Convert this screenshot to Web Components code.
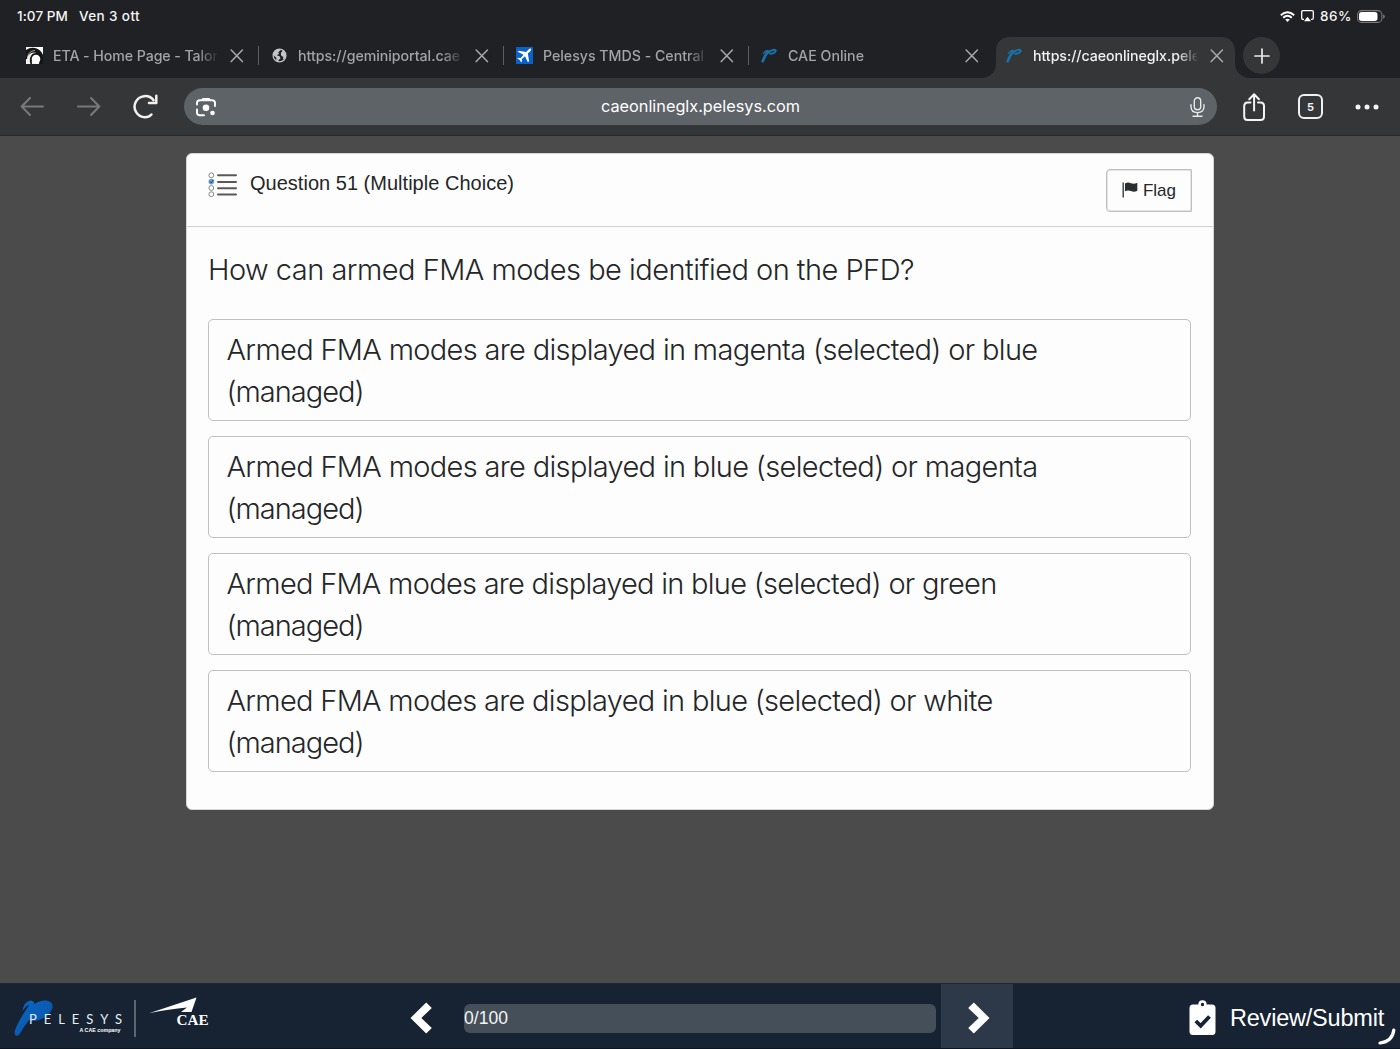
<!DOCTYPE html>
<html lang="en">
<head>
<meta charset="utf-8">
<title>caeonlineglx.pelesys.com</title>
<style>
html,body{margin:0;height:100%;overflow:hidden;background:#4b4b4b}
body{font-family:Inter,sans-serif}
</style>
</head>
<body>
<exam-screen></exam-screen>
<script>
const CLOSE = '<svg width="14" height="14" viewBox="0 0 14 14" fill="none" stroke="#a7a9ac" stroke-width="1.5" stroke-linecap="round"><path d="M1.2 1 12.400 12.600M12.400 1 1.200 12.600"/></svg>';
const ICONS = {
  eta: '<svg width="17" height="17" viewBox="0 0 17 17"><path d="M0 0H17V17H0Z" fill="#f4f4f4"/><path d="M0 3Q5-.5 10 1.200Q15 3 17 8V17H13Q14.500 9 9.500 8.500Q5 9 6 17H4.500Q2 10 8 5.500Q2 6 1 12H0Z" fill="#151515"/><path d="M1.500 11Q2 4 9 3.500M3.500 15Q2 7 9.500 5.500" stroke="#ddd" stroke-width=".7" fill="none"/><circle cx="10" cy="12" r="4.300" fill="#fff"/><path d="M8 0H17V7Q14 1.500 8 0Z" fill="#fff"/></svg>',
  globe: '<svg width="17" height="17" viewBox="0 0 17 17"><circle cx="8.500" cy="8.500" r="6.400" fill="#202124" stroke="#c3c5c8" stroke-width="1.300"/><path d="M2 6.500 4.500 3 8.500 2 9.500 3.300 7.300 5.300 8 7 5.600 8.200 8.600 9.300 9.500 11.200 7.700 13 7 15 5.300 13 5.400 10.800 3 8.800ZM10.200 5.600 12 3.300 14.600 6.500 14.800 9.500 13.200 12.500 12 12 12.300 9.800 10.500 9 9.800 7Z" fill="#c3c5c8"/></svg>',
  plane: '<svg width="17" height="17" viewBox="0 0 17 17"><path d="M0 0H17V17H0Z" fill="#0862c8"/><path d="M14.900 1.600Q15.900 2.500 14.300 4.200L11.800 6.500 13.100 14.300 11.900 15.300 9 9.300 5.800 12 6 14.300 5 15.300 3.700 12.900 1.300 11.600 2.300 10.700 4.700 10.900 7.500 7.700 1.600 4.800 2.600 3.700 10.200 5 12.600 2.500Q14 1.100 14.900 1.600Z" fill="#fff"/></svg>',
  pel: '<svg width="17" height="17" viewBox="0 0 17 17" fill="none" stroke="#1873ac" stroke-linecap="round"><path d="M1.700 14.200Q3.500 9.500 6.700 4.500" stroke-width="2.600"/><path d="M2.200 6.500Q4.500 3.300 7.300 3.300" stroke-width="1.200"/><path d="M6.500 6Q10 2.500 13.500 2.800Q16 3.300 13.500 5.500Q11.300 7.200 9 6.600" stroke-width="1.900"/></svg>'
};

function define(name, css, html, after) {
  customElements.define(name, class extends HTMLElement {
    connectedCallback() {
      if (this.shadowRoot) return;
      const root = this.attachShadow({ mode: 'open' });
      const markup = typeof html === 'function' ? html(this) : html;
      root.innerHTML = '<style>:host{box-sizing:border-box}*{box-sizing:border-box}svg{display:block;flex:none}' + css + '</style>' + markup;
      if (after) after(this, root);
    }
  });
}

define('exam-screen', ':host{display:flex;flex-direction:column;height:1049px;width:1400px;background:#4b4b4b}main{flex:1;padding:17px 186px 0}',
  '<status-bar></status-bar><tab-strip></tab-strip><browser-toolbar></browser-toolbar><main><question-card></question-card></main><exam-footer></exam-footer>');

define('status-bar', ':host{display:flex;height:34px;background:#202124;color:#f5f5f5;font:500 13.5px/33px Inter,sans-serif;padding:0 17px 0 17px}.l{display:flex;gap:11px;flex:1}.r{display:flex;align-items:center;gap:6px;height:32px}',
  `<div class="l"><fit-text w="51">1:07 PM</fit-text><fit-text w="61">Ven 3 ott</fit-text></div>
  <div class="r"><svg width="15" height="11" viewBox="0 0 15 11" fill="none" stroke="#fff" stroke-width="1.900"><path d="M.8 4.300Q7.500-2 14.200 4.300M3.200 6.700Q7.500 2.900 11.800 6.700"/><path d="M5.200 8.500Q7.500 6.800 9.800 8.500L7.500 10.900Z" fill="#fff" stroke="none"/></svg>
  <svg width="13" height="12" viewBox="0 0 13 12"><path d="M3 9.300H2Q.7 9.300.7 8V2Q.7.700 2 .7H11Q12.300.700 12.300 2V8Q12.300 9.300 11 9.300H10" fill="none" stroke="#fff" stroke-width="1.300"/><path d="M6.500 6.800 10 11.300H3Z" fill="#fff"/></svg>
  <fit-text w="32">86%</fit-text>
  <svg style="margin-left:-1px;margin-right:-2px" width="28" height="13" viewBox="0 0 28 13"><rect x=".6" y=".6" width="24.300" height="11.800" rx="4" fill="none" stroke="#77797c" stroke-width="1.100"/><rect x="2" y="2" width="18.500" height="9" rx="2.700" fill="#fff"/><path d="M26.200 4.300Q27.800 5 27.800 6.500T26.200 8.700Z" fill="#77797c"/></svg></div>`);

define('tab-strip', ':host{display:flex;height:44px;background:#202124;padding-left:13px}.new{width:37px;height:37px;border-radius:50%;background:#353638;margin:3px 0 0 7px;display:flex;align-items:center;justify-content:center}',
  `<browser-tab icon="eta"><fit-text w="168">ETA - Home Page - Talon</fit-text></browser-tab>
  <browser-tab icon="globe"><fit-text w="162">https://geminiportal.cae</fit-text></browser-tab>
  <browser-tab icon="plane"><fit-text w="161">Pelesys TMDS - Central</fit-text></browser-tab>
  <browser-tab icon="pel" last><fit-text w="76">CAE Online</fit-text></browser-tab>
  <browser-tab icon="pel" active><fit-text w="167">https://caeonlineglx.pele</fit-text></browser-tab>
  <div class="new"><svg width="16" height="16" viewBox="0 0 16 16" stroke="#e8eaed" stroke-width="1.700" stroke-linecap="round"><path d="M8 1V15M1 8H15"/></svg></div>`);

define('browser-tab', `:host{display:block;width:245px;height:44px;color:#a2a4a7;font:500 14.200px/36px Inter,sans-serif;flex:none}
  .row{position:relative;z-index:1;display:flex;align-items:center;height:37px;margin-top:3px;padding-left:13px;width:245px}
  .t{width:164px;margin:0 13px 0 10px;white-space:nowrap;overflow:hidden;-webkit-mask-image:linear-gradient(90deg,#000 88%,transparent 101%);mask-image:linear-gradient(90deg,#000 88%,transparent 101%)}
  .sep{width:1.500px;height:19px;background:#5b5e63;margin-left:auto;margin-right:-1px}
  :host([last]) .sep,:host([active]) .sep{display:none}
  .bg{display:none}
  :host([active]){width:243px;color:#f1f1f2}
  :host([active]) .row{margin-top:-41px}
  :host([active]) .bg{display:block;margin-left:-14px}`,
  el => `<svg class="bg" width="275" height="44" viewBox="0 0 275 44"><path d="M0 44H2C12 44 17 37 17 29V17C17 9 22 3 31 3H242C251 3 256 9 256 17V29C256 37 262 44 271 44Z" fill="#353638"/></svg><div class="row">${ICONS[el.getAttribute('icon')]}<div class="t"><slot></slot></div>${CLOSE}<i class="sep"></i></div>`);

define('browser-toolbar', `:host{display:flex;align-items:center;height:58px;background:#353638;border-bottom:1px solid #252628;padding:0 20px 0 20px}
  .omni{display:flex;align-items:center;width:1033px;height:37px;border-radius:19px;background:#5d6367;color:#fff;padding:0 12px;margin-left:26px;margin-right:26px;font:400 16.300px/34px Inter,sans-serif}
  .omni fit-text{margin:-2px 390px 0 384px}`,
  `<svg width="24" height="20" viewBox="0 0 24 20" fill="none" stroke="#77797b" stroke-width="2" stroke-linecap="round" stroke-linejoin="round"><path d="M23 9.500H2M10 1 1.700 9.500 10 18"/></svg>
  <svg style="margin-left:33px" width="24" height="20" viewBox="0 0 24 20" fill="none" stroke="#77797b" stroke-width="2" stroke-linecap="round" stroke-linejoin="round"><path d="M1 9.500H22M14 1 22.300 9.500 14 18"/></svg>
  <svg style="margin-left:32px" width="25" height="26" viewBox="0 0 25 26" fill="none" stroke="#f1f1f1" stroke-width="2.500" stroke-linecap="round" stroke-linejoin="round"><path d="M18.400 20.500Q16 23.300 12 23.300A10.600 10.600 0 1 1 20.500 6.100M23.300 1.800V9H16"/></svg>
  <div class="omni"><svg style="margin-left:-1px" width="22" height="22" viewBox="0 0 22 22"><path d="M2 8.500V7Q2 4.300 5 4.300H17Q20 4.300 20 7V10M2 13.500V16.500Q2 19.300 5 19.300H9" fill="none" stroke="#fff" stroke-width="1.900" stroke-linecap="round" stroke-linejoin="round"/><path d="M6 4.500 7.500 1.900H14.500L16 4.500Z" fill="#fff"/><circle cx="11" cy="11.800" r="3.300" fill="#fff"/><circle cx="17.500" cy="17" r="2.300" fill="#fff"/></svg>
  <fit-text w="199">caeonlineglx.pelesys.com</fit-text>
  <svg width="15" height="20" viewBox="0 0 15 20" fill="none" stroke="#e8e9ea" stroke-width="1.400" stroke-linecap="round"><rect x="4.300" y=".8" width="6.400" height="12" rx="3.200"/><path d="M1 7.800V9.500Q1 15.600 7.500 15.600T14 9.500V7.800M7.500 16V19M3 19.200H12"/></svg></div>
  <svg width="23" height="28" viewBox="0 0 23 28" fill="none" stroke="#f4f4f4" stroke-width="2" stroke-linecap="round" stroke-linejoin="round"><path d="M7.500 9.500H4.500Q1.200 9.500 1.200 13V23.500Q1.200 27 4.500 27H17.500Q21 27 21 23.500V13Q21 9.500 17.500 9.500H15M11.100 17.500V1.500M6.300 6.200 11.100 1.300 15.900 6.200"/></svg>
  <tab-count style="margin:0 32px 0 32px">5</tab-count>
  <svg width="24" height="6" viewBox="0 0 24 6" fill="#f4f4f4"><circle cx="3" cy="3" r="2.500"/><circle cx="12" cy="3" r="2.500"/><circle cx="21" cy="3" r="2.500"/></svg>`);

define('tab-count', ':host{display:flex;width:25px;height:25px;border:2px solid #f1f1f1;border-radius:6px;color:#f1f1f1;align-items:center;justify-content:center;font:700 11px/22px Inter,sans-serif}', '<slot></slot>');

define('question-card', `:host{display:block;width:1028px;height:657px;background:#fdfdfd;border-radius:6px;color:#242628;border:1px solid #d5d5d5}
  header{height:73px;border-bottom:1px solid #d2d2d2;display:flex;padding:15px 21px 0 21px}
  header>svg{margin-top:3px}
  .title{flex:1;margin-left:11px;font:400 20px/29px "Liberation Sans",sans-serif}
  .q{font:300 29px/42px Inter,sans-serif;padding:22px 0 0 21px;height:92px;white-space:nowrap}
  .list{display:flex;flex-direction:column;gap:15px;margin:0 22px 0 21px}`,
  `<header><svg width="31" height="26" viewBox="0 0 31 26"><g fill="#fff" stroke="#858585" stroke-width="1"><circle cx="3.300" cy="3.300" r="2.400"/><circle cx="3.300" cy="9.700" r="2.400" fill="#5b9bd8" stroke="#6d98bd"/><circle cx="3.300" cy="16" r="2.400"/><circle cx="3.300" cy="22.200" r="2.400"/></g><path d="M2 9.500 3.200 11 5.500 7.700" stroke="#24598c" fill="none"/><path d="M10 3.300H28M10 9.900H28M10 16.200H28M10 22.500H28" stroke="#58595b" stroke-width="2" stroke-linecap="round"/></svg>
  <div class="title"><fit-text w="264">Question 51 (Multiple Choice)</fit-text></div><flag-button>Flag</flag-button></header>
  <div class="q"><fit-text w="706">How can armed FMA modes be identified on the PFD?</fit-text></div>
  <div class="list">
  <answer-option><fit-text w="811">Armed FMA modes are displayed in magenta (selected) or blue</fit-text><br><fit-text w="137">(managed)</fit-text></answer-option>
  <answer-option><fit-text w="811">Armed FMA modes are displayed in blue (selected) or magenta</fit-text><br><fit-text w="137">(managed)</fit-text></answer-option>
  <answer-option><fit-text w="770">Armed FMA modes are displayed in blue (selected) or green</fit-text><br><fit-text w="137">(managed)</fit-text></answer-option>
  <answer-option><fit-text w="766">Armed FMA modes are displayed in blue (selected) or white</fit-text><br><fit-text w="137">(managed)</fit-text></answer-option></div>`);

define('flag-button', ':host{display:flex;width:86px;height:43px;border:1px solid #bfbfbf;box-shadow:inset 0 0 0 .5px #ccc;border-radius:4px 1px 1px 4px;font:400 17px/41px "Liberation Sans",sans-serif;padding-left:15px}svg{margin:12px 5px 0 0}',
  '<svg width="16" height="17" viewBox="0 0 16 17"><path d="M1.200.5V15.500" stroke="#2b2d2f" stroke-width="1.300"/><path d="M3 1.500Q6-.2 9 1.300Q12 2.500 15.300.8V8.800Q12 10.500 9 9.100Q6 7.800 3 9.200Z" fill="#2b2d2f"/></svg><fit-text w="33"><slot></slot></fit-text>');

define('answer-option', ':host{display:block;height:102px;border:1px solid #c0c0c0;border-radius:5px;padding:9px 17.5px 0;font:300 29px/41.600px Inter,sans-serif;white-space:nowrap}', '<slot></slot>');

define('exam-footer', `:host{display:flex;height:66px;background:#172332;border-bottom:1px solid #0b1420;border-top:1px solid #1b2938;color:#fff;align-items:stretch;position:relative}
  .brand{width:387px;flex:none}.nav{width:72px;display:flex;align-items:center;justify-content:center;padding-top:4px;flex:none}.next{background:#2d3948}
  .bar{width:472px;height:29px;border-radius:6px;background:#444f5a;margin:20px 5px 0;font:400 17.500px/28px "Liberation Sans",sans-serif;color:#f4f4f4}
  .review{margin-left:auto;display:flex;align-items:center;gap:14px;padding:3px 16px 0 0;font:400 23.500px/30px "Liberation Sans",sans-serif}
  .spin{position:absolute;right:4px;bottom:3px}`,
  `<div class="brand"><pelesys-logo></pelesys-logo></div>
  <div class="nav"><svg style="margin-right:5px" width="22" height="32" viewBox="0 0 22 32"><path d="M16.200.5 21.800 6 11.300 16 21.800 26 16.200 31.500.5 16Z" fill="#fff"/></svg></div>
  <div class="bar"><fit-text w="44">0/100</fit-text></div>
  <div class="nav next"><svg style="margin-left:4px" width="22" height="32" viewBox="0 0 22 32"><path d="M5.800.5.200 6 10.700 16 .2 26 5.800 31.500 21.500 16Z" fill="#fff"/></svg></div>
  <div class="review"><svg width="27" height="35" viewBox="0 0 27 35"><path fill-rule="evenodd" d="M4 4.500H9.300Q9.500.3 13.500.3T17.700 4.500H23Q26.500 4.500 26.500 8V31.500Q26.500 35 23 35H4Q.5 35 .5 31.500V8Q.5 4.500 4 4.500ZM15.200 4.500A1.700 1.700 0 1 0 11.800 4.500A1.700 1.700 0 1 0 15.200 4.500Z" fill="#fff"/><path d="M6.800 21 11.700 25.800 20.500 16.500" fill="none" stroke="#172332" stroke-width="3.800"/></svg><fit-text w="154">Review/Submit</fit-text></div>
  <svg class="spin" width="18" height="17" viewBox="0 0 18 17"><path d="M2 15Q14.500 13.500 15.800 2" fill="none" stroke="#fff" stroke-width="3.200" stroke-linecap="round"/></svg>`);

define('pelesys-logo', ':host{display:block}text{white-space:pre}',
  `<svg width="240" height="64" viewBox="0 984 240 64"><defs><linearGradient id="b" x1="0" y1="0" x2="1" y2="1"><stop offset="0" stop-color="#0a68c8"/><stop offset="1" stop-color="#0a50a0"/></linearGradient></defs>
  <path d="M14.500 1032Q17 1023 29.500 1004.500Q25.500 1006 22.200 1011.500Q23.500 1002 30.500 1000.500Q34 1000.500 34.500 1004Q39.500 1000.300 46 1000.500Q54 1002 52.300 1008Q49 1017 39 1020Q33 1022 29 1020Q24 1026 20 1033.500Q17.500 1037 15 1035Z" fill="url(#b)"/>
  <text x="29" y="1024.300" font-family="Lato,sans-serif" font-size="13" fill="#e8eef5" textLength="93" lengthAdjust="spacing">PELESYS</text>
  <text x="79.500" y="1031.500" font-family="Liberation Sans,sans-serif" font-weight="700" font-size="5.600" fill="#fff" textLength="41" lengthAdjust="spacingAndGlyphs">A CAE company</text>
  <path d="M135 1000V1037" stroke="#8b929a" stroke-width="1.200"/>
  <path d="M149 1013.300 196.500 997.500 191.500 1012H181L187 1007.500Q169 1009 149 1013.300Z" fill="#fff"/>
  <text x="176.500" y="1025.300" font-family="Liberation Serif,serif" font-weight="700" font-size="15.500" fill="#fff" textLength="32" lengthAdjust="spacingAndGlyphs">CAE</text></svg>`);

/* Spreads its line of text to the width given in "w" by letter spacing. */
define('fit-text', ':host{display:inline-block;white-space:nowrap}', '<span><slot></slot></span>', (el, root) => {
  const span = root.querySelector('span');
  const slot = el.querySelector('slot');
  const text = slot ? slot.assignedNodes().map(node => node.textContent).join('') : el.textContent;
  const gap = (parseFloat(el.getAttribute('w')) - span.getBoundingClientRect().width) / text.length;
  /* Slotted text inherits from its light-DOM parent, so the spacing goes there. */
  (slot ? el.getRootNode().host : el).style.letterSpacing = gap.toFixed(3) + 'px';
});
</script>
</body>
</html>
